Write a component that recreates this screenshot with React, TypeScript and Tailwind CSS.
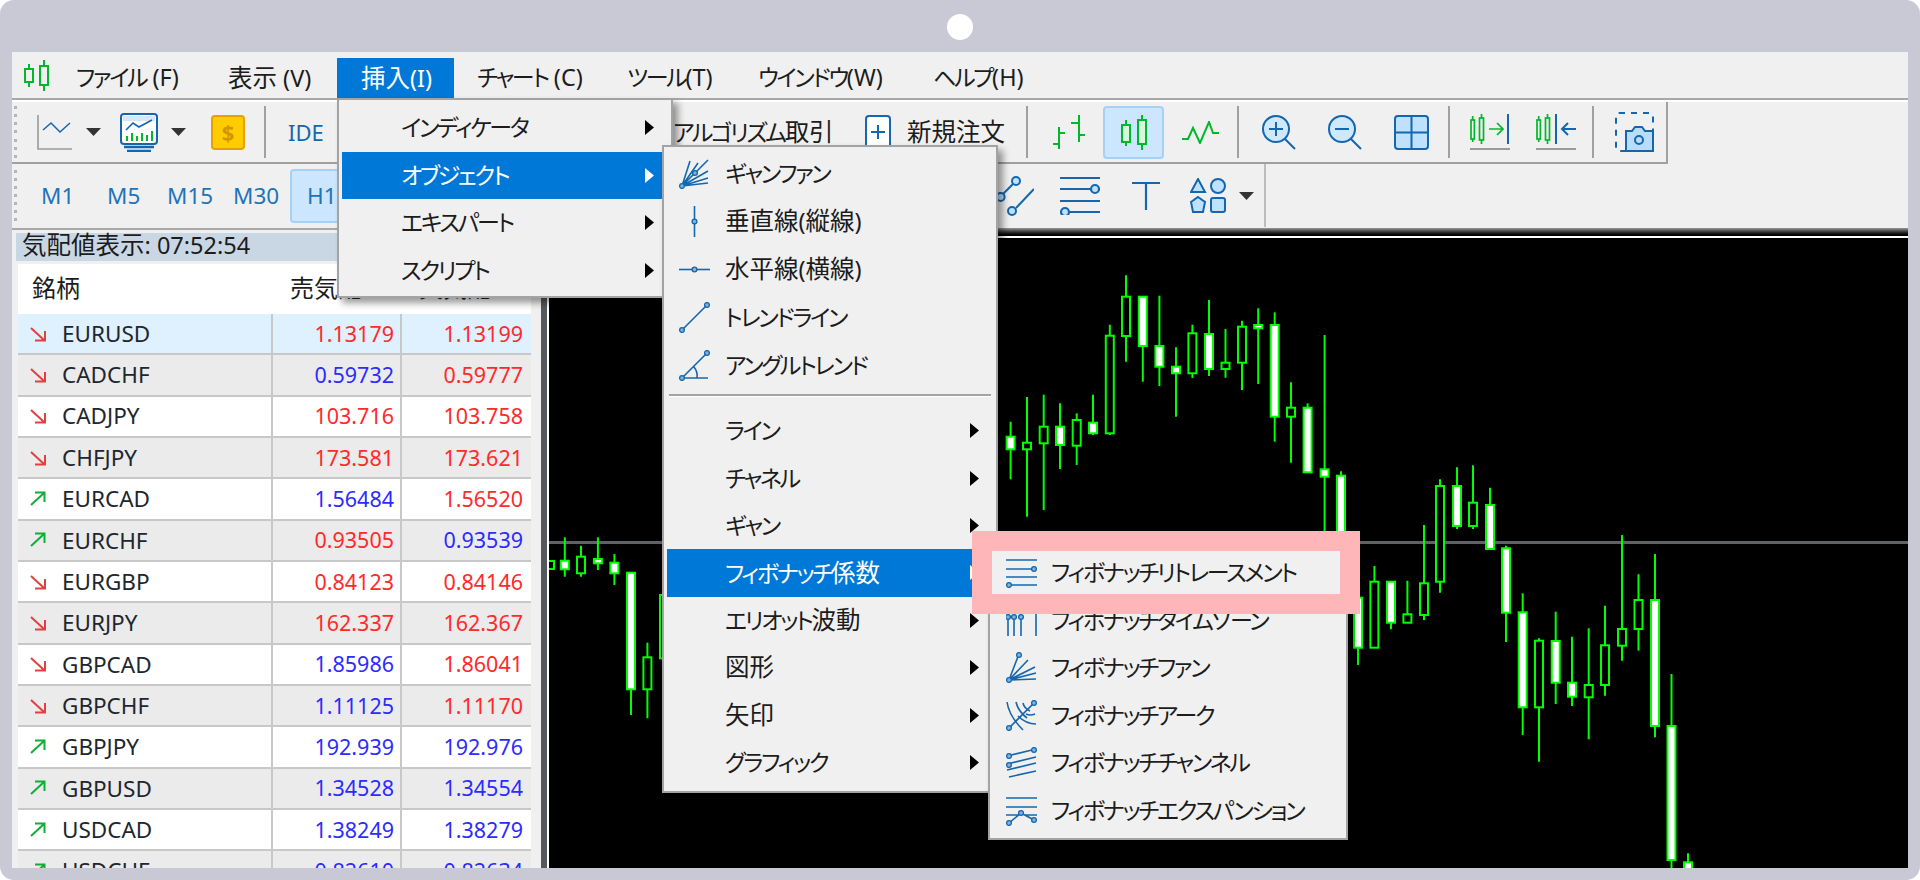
import React from "react";

const BLUE = "#1467ae";
const GREEN = "#00b82a";

type Candle = [number, number, number, number, number, boolean];

// x, wick top, wick bottom, body top, body bottom, white body
const candles: Candle[] = [
  [550, 561, 569, 561, 569, false],
  [564.8, 537.3, 576.7, 560.7, 569.3, true],
  [581, 545.7, 576.7, 556.7, 573.3, false],
  [597.9, 537.3, 570, 559, 563.3, true],
  [614.4, 554, 585, 562.7, 573.3, true],
  [631, 572.7, 715, 572.7, 689.3, true],
  [647.4, 642.7, 718.3, 657.3, 689.3, false],
  [664, 595, 658.3, 595, 658.3, false],
  [1010.6, 421.7, 479.3, 436.7, 449.3, true],
  [1027, 397, 516.7, 442.7, 449.3, false],
  [1043.7, 394.7, 510, 426.7, 443.3, false],
  [1060, 403.3, 469, 426.7, 445, true],
  [1076.7, 413.3, 465, 420, 445.7, false],
  [1093, 394.7, 435, 422.7, 433.3, true],
  [1109.8, 324.7, 435, 335.7, 433.3, false],
  [1126, 275.3, 361.7, 296.7, 336, false],
  [1142.8, 296.7, 381.7, 296.7, 346, true],
  [1159.4, 295.7, 386, 346, 366.7, true],
  [1176, 347.3, 416.7, 366.7, 373.3, true],
  [1192.4, 324.7, 378, 333.3, 373.3, false],
  [1209, 300, 376, 334, 369, true],
  [1225.5, 329, 377.7, 362.7, 369, false],
  [1242, 320.7, 390, 326.7, 362.7, false],
  [1258.2, 308.3, 384, 325, 328.3, true],
  [1274.7, 312.3, 441.7, 325, 416.7, true],
  [1291, 382.3, 462.7, 407.7, 416.7, false],
  [1307.6, 403.3, 472.3, 407.7, 472.3, true],
  [1324.6, 335, 535, 469.3, 476.7, true],
  [1341, 471.3, 540, 475.7, 540, true],
  [1358, 590, 665, 597.7, 647.7, true],
  [1374.4, 566, 647.7, 581.7, 647.7, false],
  [1391, 581.7, 629.3, 581.7, 622.7, true],
  [1407.4, 580.7, 622.7, 614.3, 622.7, false],
  [1424, 525, 620, 583.3, 615, false],
  [1440, 479.3, 592.7, 486, 581.7, false],
  [1457, 467.3, 529, 486, 526, true],
  [1473, 465.3, 529, 502.7, 526, false],
  [1490, 487.7, 549, 505, 549, true],
  [1506, 545.7, 642, 548.3, 612.7, true],
  [1522.7, 593.3, 735, 612.3, 707.3, true],
  [1539, 638.3, 761.7, 640.7, 707.3, false],
  [1555.7, 611.7, 704, 641, 682.7, true],
  [1572, 636.7, 706, 682.7, 696.7, true],
  [1588.7, 628.3, 739.3, 685, 697.3, false],
  [1605, 605.7, 695.7, 645.3, 685, false],
  [1622, 535, 660.7, 629, 645.7, false],
  [1638.5, 574.3, 650.7, 600, 629, false],
  [1655, 554, 737.3, 600, 726, true],
  [1671.5, 674, 880, 726, 860, true],
  [1688, 853.3, 880, 862.3, 880, true],
];

const quotes: [string, boolean, string, boolean, string, boolean][] = [
  ["EURUSD", false, "1.13179", false, "1.13199", false],
  ["CADCHF", false, "0.59732", true, "0.59777", false],
  ["CADJPY", false, "103.716", false, "103.758", false],
  ["CHFJPY", false, "173.581", false, "173.621", false],
  ["EURCAD", true, "1.56484", true, "1.56520", false],
  ["EURCHF", true, "0.93505", false, "0.93539", true],
  ["EURGBP", false, "0.84123", false, "0.84146", false],
  ["EURJPY", false, "162.337", false, "162.367", false],
  ["GBPCAD", false, "1.85986", true, "1.86041", false],
  ["GBPCHF", false, "1.11125", true, "1.11170", false],
  ["GBPJPY", true, "192.939", true, "192.976", true],
  ["GBPUSD", true, "1.34528", true, "1.34554", true],
  ["USDCAD", true, "1.38249", true, "1.38279", true],
  ["USDCHF", true, "0.82610", true, "0.82634", true],
];

const Grip = () => (
  <div className="flex h-[52px] w-[4px] flex-col justify-between">
    {Array.from({ length: 7 }).map((_, i) => (
      <div key={i} className="h-[3px] w-[3px] bg-[#b4b4b4]" />
    ))}
  </div>
);

const Sep = ({ className }: { className: string }) => <div className={`h-[52px] w-[2px] bg-[#a0a0a0] ${className}`} />;

const Tri = ({ className }: { className: string }) => (
  <svg width="15" height="8" viewBox="0 0 15 8" className={className}>
    <polygon points="0,0 15,0 7.5,8" fill="#333" />
  </svg>
);

const Arrow = ({ white, className }: { white?: boolean; className: string }) => (
  <svg width="9" height="15" viewBox="0 0 9 15" className={`shrink-0 ${className}`}>
    <polygon points="0,0 9,7.5 0,15" fill={white ? "#fff" : "#000"} />
  </svg>
);

const Trend = ({ down }: { down: boolean }) => (
  <svg width="16" height="16" viewBox="0 0 16 16" fill="none" strokeWidth="2" stroke={down ? "#e2403f" : "#0fae37"}>
    {down ? <path d="M1 2 L14 14 M15 5 V14.5 H5" /> : <path d="M1 14 L14 2 M5 1.5 H14.5 V11" />}
  </svg>
);

const Ic = ({ children }: { children: React.ReactNode }) => (
  <svg width="31" height="31" viewBox="0 0 31 31" fill="none" stroke={BLUE} strokeWidth="1.6" className="shrink-0">
    {children}
  </svg>
);

const Dot = ({ x, y }: { x: number; y: number }) => <circle cx={x} cy={y} r="2.4" fill="#7fb2dd" stroke={BLUE} strokeWidth="1.3" />;

const GannFan = () => (
  <Ic>
    <path d="M3 28 L29 2 M3 28 L11 3 M3 28 L19 5 M3 28 L29 13 M3 28 L29 20 M3 28 L29 25" />
    <Dot x={3} y={28} />
    <Dot x={16} y={15} />
  </Ic>
);
const VLine = () => (
  <Ic>
    <path d="M15.5 0 V31" />
    <Dot x={15.5} y={15.5} />
  </Ic>
);
const HLine = () => (
  <Ic>
    <path d="M0 15.5 H31" />
    <Dot x={15.5} y={15.5} />
  </Ic>
);
const TrendLine = () => (
  <Ic>
    <path d="M3 28 L28 3" />
    <Dot x={3} y={28} />
    <Dot x={28} y={3} />
  </Ic>
);
const AngleTrend = () => (
  <Ic>
    <path d="M3 28 L28 3 M3 28 H29 M15 17 Q19 22 18 28" />
    <Dot x={3} y={28} />
    <Dot x={28} y={3} />
  </Ic>
);
const FibRetrace = () => (
  <Ic>
    <path d="M0 3 H31 M0 12 H31 M0 20 H31 M0 28 H31" />
    <Dot x={28} y={12} />
    <Dot x={3} y={28} />
  </Ic>
);
const FibTime = () => (
  <Ic>
    <path d="M2 0 V31 M8 0 V31 M15 0 V31 M30 0 V31" />
    <Dot x={2} y={12} />
    <Dot x={8} y={12} />
    <Dot x={15} y={12} />
  </Ic>
);
const FibFan = () => (
  <Ic>
    <path d="M3 28 L13 2 M3 28 L22 8 M3 28 L29 15 M3 28 L30 21 M3 28 L30 27" />
    <Dot x={3} y={28} />
    <Dot x={13} y={3} />
  </Ic>
);
const FibArc = () => (
  <Ic>
    <path d="M3 28 L28 3 M1 2 Q3 16 17 30 M10 2 Q12 11 21 18 M17 3 Q18 8 24 11 M29 14 Q24 16 20 14 M30 24 Q20 24 12 16" />
    <Dot x={3} y={28} />
    <Dot x={28} y={3} />
  </Ic>
);
const FibChannel = () => (
  <Ic>
    <path d="M1 9 L30 2 M1 17 L30 10 M1 23 L30 16 M3 30 L30 24" />
    <Dot x={3} y={9} />
    <Dot x={28} y={3} />
    <Dot x={3} y={18} />
  </Ic>
);
const FibExpansion = () => (
  <Ic>
    <path d="M0 3 H31 M0 12 H31 M0 20 H12 M19 20 H31 M3 28 L15 18 L28 25" />
    <Dot x={3} y={28} />
    <Dot x={15} y={18} />
    <Dot x={28} y={25} />
  </Ic>
);

// the source font has narrow kana next to full size kanji, so each run gets its own size
const MenuText = ({ className, children }: { className?: string; children: string }) => (
  <span className={`whitespace-nowrap leading-none text-[#1c1c1c] ${className ?? ""}`}>
    {children
      .split(/([\u4e00-\u9fff]+|[\u30a0-\u30ff]+)/)
      .filter(Boolean)
      .map((run, i) =>
        /[\u4e00-\u9fff]/.test(run) ? (
          <span key={i} className="text-[24.5px]">{run}</span>
        ) : /[\u30a0-\u30ff]/.test(run) ? (
          <span key={i} className="text-[23px] tracking-[-2.3px]">{run}</span>
        ) : (
          <span key={i} className="text-[23.5px]">{run}</span>
        )
      )}
  </span>
);

const Toolbar1 = () => (
  <div className="flex h-[64px] border-t-2 border-white">
    <div className="flex h-[62px] w-[1656px] items-center border-r-2 border-b-2 border-[#a0a0a0] pl-[2px]">
      <Grip />
      <svg width="35" height="35" viewBox="0 0 35 35" fill="none" className="ml-[19px]">
        <path d="M1 0 V34 H35" stroke="#9a9a9a" strokeWidth="1.6" />
        <path d="M6 15 L14 8 L23 17 L33 8" stroke={BLUE} strokeWidth="1.5" />
      </svg>
      <Tri className="ml-[14px]" />
      <svg width="38" height="39" viewBox="0 0 38 39" fill="none" className="ml-[19px]">
        <rect x="1" y="1" width="36" height="30" rx="3" fill="#fff" stroke={BLUE} strokeWidth="2" />
        <path d="M3 3 H35 V8 H3 Z" fill="#d4e8f8" />
        <path d="M6 17 L13 10 L19 14 L32 7" stroke={BLUE} strokeWidth="1.6" />
        <path d="M7 28 V23 M12 28 V20 M17 28 V23 M22 28 V20 M27 28 V22 M32 28 V18" stroke={GREEN} strokeWidth="2" />
        <path d="M4 34 H34 M7 38 H31" stroke={BLUE} strokeWidth="2.4" />
      </svg>
      <Tri className="ml-[13px]" />
      <div className="ml-[25px] flex h-[35px] w-[34px] items-center justify-center rounded-[4px] border-2 border-[#e6a100] bg-[#ffcc00] text-[22px] font-bold text-[#d49500]">$</div>
      <Sep className="ml-[19px]" />
      <span className="ml-[22px] w-[37px] text-[22px] text-[#1467ae]">IDE</span>
      <MenuText className="ml-[348px] w-[154px]">アルゴリズム取引</MenuText>
      <svg width="26" height="35" viewBox="0 0 26 35" fill="none" className="ml-[38px]">
        <rect x="1" y="1" width="24" height="33" rx="3" fill="#fff" stroke={BLUE} strokeWidth="2" />
        <path d="M13 10 V24 M6 17 H20" stroke={BLUE} strokeWidth="2" />
      </svg>
      <MenuText className="ml-[16px] w-[98px]">新規注文</MenuText>
      <Sep className="ml-[21px]" />
      <svg width="35" height="35" viewBox="0 0 35 35" fill="none" stroke={GREEN} strokeWidth="2" className="ml-[23px]">
        <path d="M8 12 V34 M8 18 H14 M2 29 H8 M28 0 V27 M20 8 H28 M28 20 H34" />
      </svg>
      <div className="ml-[17px] flex h-[53px] w-[61px] items-center justify-center rounded-[4px] border-2 border-[#a4d2f7] bg-[#cce6ff]">
        <svg width="28" height="35" viewBox="0 0 28 35" fill="#d9f7de" stroke={GREEN} strokeWidth="2">
          <path d="M6 5 V11 M6 26 V31 M22 0 V5 M22 29 V35" />
          <rect x="2" y="10" width="8" height="17" />
          <rect x="18" y="5" width="8" height="24" />
        </svg>
      </div>
      <svg width="37" height="23" viewBox="0 0 37 23" fill="none" stroke={GREEN} strokeWidth="2" className="ml-[18px]">
        <path d="M0 18 H6 L11 7 L18 22 L27 1 L31 12 H37" />
      </svg>
      <Sep className="ml-[18px]" />
      <svg width="34" height="35" viewBox="0 0 34 35" fill="none" stroke={BLUE} strokeWidth="2" className="ml-[23px]">
        <circle cx="14" cy="14" r="13" fill="#d0e8fb" />
        <path d="M23 24 L33 34 M14 7 V21 M7 14 H21" />
      </svg>
      <svg width="34" height="35" viewBox="0 0 34 35" fill="none" stroke={BLUE} strokeWidth="2" className="ml-[32px]">
        <circle cx="14" cy="14" r="13" fill="#d0e8fb" />
        <path d="M23 24 L33 34 M7 14 H21" />
      </svg>
      <svg width="35" height="35" viewBox="0 0 35 35" fill="#bfe1fd" stroke={BLUE} strokeWidth="2" className="ml-[32px]">
        <rect x="1" y="1" width="33" height="33" rx="3" />
        <path d="M17.5 1 V34 M1 17.5 H34" />
      </svg>
      <Sep className="ml-[19px]" />
      <svg width="40" height="36" viewBox="0 0 40 36" fill="none" strokeWidth="1.7" className="ml-[20px]">
        <g stroke={GREEN}>
          <rect x="1" y="6" width="3.4" height="19" />
          <rect x="9.5" y="4" width="4" height="22" />
          <path d="M2.7 2 V6 M2.7 25 V28 M11.5 0 V4 M11.5 26 V30 M19 15 H33 M27 9 L33 15 L27 21" />
        </g>
        <path d="M38 0 V30" stroke={BLUE} strokeWidth="2" />
        <path d="M0 35 H40" stroke="#9a9a9a" strokeWidth="2" />
      </svg>
      <svg width="40" height="36" viewBox="0 0 40 36" fill="none" strokeWidth="1.7" className="ml-[26px]">
        <g stroke={GREEN}>
          <rect x="1" y="6" width="3.4" height="19" />
          <rect x="9.5" y="4" width="4" height="22" />
          <path d="M2.7 2 V6 M2.7 25 V28 M11.5 0 V4 M11.5 26 V30" />
        </g>
        <path d="M20 0 V30 M26 15 H40 M32 9 L26 15 L32 21" stroke={BLUE} strokeWidth="2" />
        <path d="M0 35 H40" stroke="#9a9a9a" strokeWidth="2" />
      </svg>
      <Sep className="ml-[16px]" />
      <svg width="39" height="40" viewBox="0 0 39 40" fill="none" stroke={BLUE} strokeWidth="2" className="ml-[21px]">
        <rect x="1" y="1" width="37" height="38" rx="3" strokeDasharray="6 6" />
        <path d="M11 19 H17 L20 15 H27 L30 19 H38 V39 H11 Z" fill="#b8dcfa" />
        <circle cx="24" cy="28" r="4" />
      </svg>
    </div>
  </div>
);

const Toolbar2 = () => (
  <div className="flex h-[64px]">
    <div className="flex h-[63px] w-[1254px] items-center border-r-2 border-[#bdbdbd] pl-[2px] text-[22.5px] text-[#1f74b8]">
      <Grip />
      <span className="ml-[23px] w-[33px]">M1</span>
      <span className="ml-[33px] w-[34px]">M5</span>
      <span className="ml-[26px] w-[46px]">M15</span>
      <span className="ml-[20px] w-[47px]">M30</span>
      <div className="ml-[10px] flex h-[54px] w-[60px] items-center rounded-[4px] border-2 border-[#a4d2f7] bg-[#cce6ff] pl-[15px]">H1</div>
      <svg width="50" height="40" viewBox="0 0 50 40" fill="none" stroke={BLUE} strokeWidth="2" className="ml-[634px]">
        <path d="M19 18 L29 8 M32 32 L50 13" />
        <circle cx="16.6" cy="21" r="4" fill="#bfe1fd" />
        <circle cx="32" cy="5" r="4" fill="#bfe1fd" />
        <circle cx="28" cy="35" r="4" fill="#bfe1fd" />
      </svg>
      <svg width="40" height="38" viewBox="0 0 40 38" fill="none" stroke={BLUE} strokeWidth="2.2" className="ml-[26px]">
        <path d="M0 1 H40 M0 12 H32 M0 24 H40 M10 35 H40" />
        <circle cx="35" cy="12" r="4" fill="#bfe1fd" />
        <circle cx="5" cy="35" r="4" fill="#bfe1fd" />
      </svg>
      <svg width="28" height="28" viewBox="0 0 28 28" fill="none" stroke={BLUE} strokeWidth="2.2" className="ml-[32px]">
        <path d="M0 1 H28 M14 1 V28" />
      </svg>
      <svg width="36" height="35" viewBox="0 0 36 35" fill="#bfe1fd" stroke={BLUE} strokeWidth="2" className="ml-[30px]">
        <polygon points="8,1 15,14 1,14" />
        <circle cx="28" cy="8" r="7" />
        <polygon points="8,19 15,24 13,34 3,34 1,24" />
        <rect x="21" y="20" width="14" height="14" rx="2" />
      </svg>
      <Tri className="ml-[13px]" />
    </div>
  </div>
);

const QuoteTable = () => (
  <div className="ml-[6px] mt-[3px] w-[513px] bg-white">
    <div className="grid h-[48px] grid-cols-[255px_129px_129px] items-center text-[24px] leading-none text-[#1c1c1c]">
      <span className="pl-[14px]">銘柄</span>
      <span className="pl-[17px]">売気配</span>
      <span className="pl-[17px]">買気配</span>
    </div>
    <div className="h-[2px]" />
    {quotes.map((q, i) => (
      <div
        key={q[0]}
        className={`grid h-[41.35px] grid-cols-[255px_129px_129px] border-b-2 border-[#c8c8c8] text-[21.5px] ${
          i === 0 ? "bg-[#dff0ff]" : i % 2 === 1 ? "bg-[#ebebeb]" : "bg-white"
        }`}
      >
        <div className="flex items-center border-r-2 border-[#c8c8c8] pl-[12px]">
          <Trend down={!q[1]} />
          <span className="ml-[16px] text-[22.5px] text-[#20262e]">{q[0]}</span>
        </div>
        <div className={`flex items-center justify-end border-r-2 border-[#c8c8c8] pr-[6px] ${q[3] ? "text-[#2c2cff]" : "text-[#ff2a2a]"}`}>{q[2]}</div>
        <div className={`flex items-center justify-end pr-[8px] ${q[5] ? "text-[#2c2cff]" : "text-[#ff2a2a]"}`}>{q[4]}</div>
      </div>
    ))}
  </div>
);

const Chart = () => (
  <svg width="1359" height="630" viewBox="549 238 1359 630" className="block">
    <rect x="549" y="541" width="1359" height="3" fill="#5f6266" />
    {candles.map(([x, wt, wb, bt, bb, white]) => (
      <g key={x}>
        <line x1={x} x2={x} y1={wt} y2={wb} stroke="#00ff00" strokeWidth="2" />
        <rect x={x - 4} y={bt} width="8" height={bb - bt} fill={white ? "#fff" : "#000"} stroke="#00ff00" strokeWidth="2" />
      </g>
    ))}
  </svg>
);

const object1: [React.ReactNode, string][] = [
  [<GannFan />, "ギャンファン"],
  [<VLine />, "垂直線(縦線)"],
  [<HLine />, "水平線(横線)"],
  [<TrendLine />, "トレンドライン"],
  [<AngleTrend />, "アングルトレンド"],
];

const object2 = ["ライン", "チャネル", "ギャン", "フィボナッチ係数", "エリオット波動", "図形", "矢印", "グラフィック"];

const fibo: [React.ReactNode, string][] = [
  [<FibRetrace />, "フィボナッチリトレースメント"],
  [<FibTime />, "フィボナッチタイムゾーン"],
  [<FibFan />, "フィボナッチファン"],
  [<FibArc />, "フィボナッチアーク"],
  [<FibChannel />, "フィボナッチチャンネル"],
  [<FibExpansion />, "フィボナッチエクスパンション"],
];

const insertItems = ["インディケータ", "オブジェクト", "エキスパート", "スクリプト"];

const popup = "absolute border-2 border-[#a3a3a3] bg-[#f0f0f0] shadow-[5px_5px_7px_rgba(0,0,0,0.4)]";

const menus = [
  { label: "ファイル (F)", cls: "w-[152px] pl-[12px]" },
  { label: "表示 (V)", cls: "w-[121px] pl-[12px]" },
  { label: "挿入(I)", cls: "w-[117px] pl-[24px] bg-[#0078d7]" },
  { label: "チャート (C)", cls: "w-[161px] pl-[23px]" },
  { label: "ツール(T)", cls: "w-[131px] pl-[12px]" },
  { label: "ウインドウ(W)", cls: "w-[175px] pl-[12px]" },
  { label: "ヘルプ(H)", cls: "w-[160px] pl-[12px]" },
];

export default function App() {
  return (
    <div className="h-[880px] w-[1920px] overflow-hidden bg-white [font-family:'Noto_Sans','Noto_Sans_CJK_JP',sans-serif] [font-feature-settings:'palt']">
      <div className="flex h-[880px] flex-col rounded-[14px] bg-[#c8c9d5] px-[12px] pb-[12px]">
        <div className="flex h-[52px] shrink-0 items-center justify-center">
          <div className="mb-[-2px] h-[26px] w-[26px] rounded-full bg-white" />
        </div>
        <div className="relative h-[816px] w-[1896px] overflow-hidden bg-[#f0f0f0]">
          <div className="flex h-[48px] items-end border-b-2 border-[#a8a8a8]">
            <div className="flex h-[46px] w-[52px] items-center justify-center pr-[2px]">
              <svg width="26" height="31" viewBox="0 0 26 31" fill="none" stroke={GREEN} strokeWidth="2">
                <path d="M5 4 V9 M5 22 V27 M20 0 V6 M20 25 V31" />
                <rect x="1" y="9" width="8" height="13" />
                <rect x="16" y="6" width="8" height="19" />
              </svg>
            </div>
            {menus.map((m) => (
              <div key={m.label} className={`flex h-[40px] items-center ${m.cls}`}>
                <MenuText className={m.label.startsWith("挿入") ? "!text-white" : ""}>{m.label}</MenuText>
              </div>
            ))}
          </div>
          <Toolbar1 />
          <Toolbar2 />
          <div className="flex h-[640px]">
            <div className="w-[529px] border-t-2 border-[#a8a8a8] pt-[3px]">
              <div className="ml-[4px] flex h-[28px] w-[515px] items-center whitespace-nowrap bg-[#c9d7e5] pb-[3px] pl-[6px] text-[23.5px] leading-none text-[#1c1c1c]">
                <span className="text-[24.5px]">気配値表示</span>: 07:52:54
              </div>
              <QuoteTable />
            </div>
            <div className="flex flex-1 flex-col bg-black">
              <div className="h-[8px] bg-gradient-to-b from-[#9a9a9a] via-[#333] to-black" />
              <div className="flex flex-1">
                <div className="w-[6px] bg-[#55585c]" />
                <div className="flex-1 border-l-2 border-t-2 border-white">
                  <Chart />
                </div>
              </div>
            </div>
          </div>

          {/* Insert menu */}
          <div className={`${popup} left-[325px] top-[46px] h-[200px] w-[336px] px-[3px] pt-[4px]`}>
            {insertItems.map((t, i) => (
              <div key={t} className={`flex h-[47.5px] items-center pl-[59px] ${i === 1 ? "bg-[#0078d7]" : ""}`}>
                <MenuText className={i === 1 ? "!text-white" : ""}>{t}</MenuText>
                <Arrow white={i === 1} className="ml-auto mr-[14px]" />
              </div>
            ))}
          </div>

          {/* Object submenu */}
          <div className={`${popup} left-[650px] top-[93px] h-[648px] w-[336px] px-[3px] pt-[2px]`}>
            {object1.map(([icon, t]) => (
              <div key={t} className="flex h-[48px] items-center pl-[12px]">
                {icon}
                <MenuText className="ml-[15px]">{t}</MenuText>
              </div>
            ))}
            <div className="mx-[2px] mb-[10px] mt-[5px] h-[3px] border-b border-white bg-[#a3a3a3]" />
            {object2.map((t, i) => (
              <div key={t} className={`flex h-[47.4px] items-center pl-[58px] ${i === 3 ? "bg-[#0078d7]" : ""}`}>
                <MenuText className={i === 3 ? "!text-white" : ""}>{t}</MenuText>
                <Arrow white={i === 3} className="ml-auto mr-[14px]" />
              </div>
            ))}
          </div>

          {/* Fibonacci submenu */}
          <div className={`${popup} left-[976px] top-[491px] h-[297px] w-[360px] pt-[4px]`}>
            {fibo.map(([icon, t]) => (
              <div key={t} className="flex h-[47.5px] items-center pl-[16px]">
                {icon}
                <MenuText className="ml-[14px]">{t}</MenuText>
              </div>
            ))}
          </div>

          {/* Highlight around the target item */}
          <div className="absolute left-[960px] top-[479px] h-[83px] w-[388px] border-[20px] border-[#ffb6b8]" />
        </div>
      </div>
    </div>
  );
}
